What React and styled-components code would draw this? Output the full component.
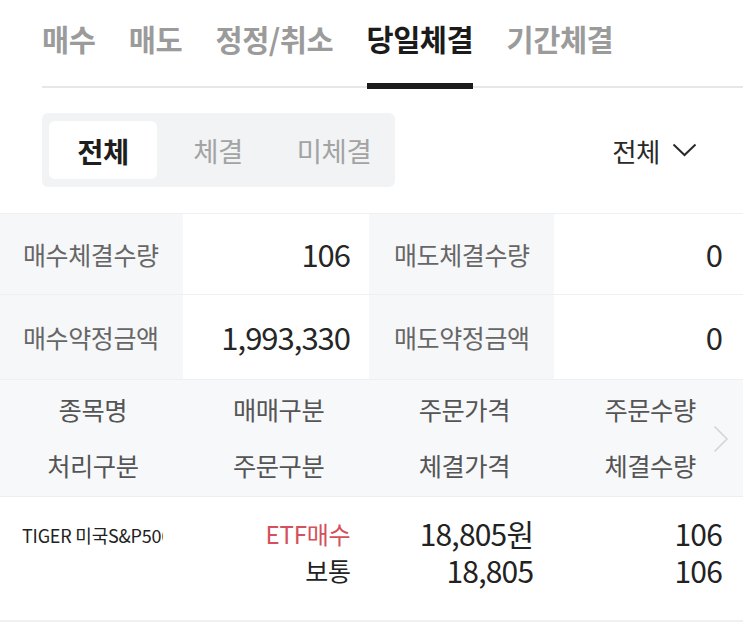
import React from "react";
import styled, { createGlobalStyle } from "styled-components";

const GlobalStyle = createGlobalStyle`
  html, body { margin: 0; padding: 0; background: #ffffff; }
  body { font-family: "Noto Sans CJK KR", "Noto Sans", sans-serif; color: #222; }
  * { box-sizing: border-box; }
`;

const Page = styled.div`
  width: 743px;
  height: 630px;
  overflow: hidden;
  background: #fff;
`;

const TabBar = styled.nav`
  margin-left: 42px;
  height: 88px;
  display: flex;
  gap: 33.5px;
  border-bottom: 2px solid #e6e7e9;
`;

const Tab = styled.div`
  position: relative;
  padding-top: 18px;
  font-size: 29.5px;
  line-height: 40px;
  font-weight: 700;
  color: ${(p) => (p.$active ? "#1b1b1b" : "#9b9b9b")};
  letter-spacing: -0.5px;
  &::after {
    content: "";
    display: ${(p) => (p.$active ? "block" : "none")};
    position: absolute;
    left: 0;
    right: 0;
    bottom: -3px;
    height: 6px;
    background: #1b1b1b;
  }
`;

const FilterRow = styled.div`
  margin-top: 25px;
  padding: 0 46px 0 42px;
  display: flex;
  align-items: center;
  justify-content: space-between;
`;

const Segment = styled.div`
  display: grid;
  grid-template-columns: 108px 122px 110px;
  padding: 8px 6px 8px 7px;
  height: 74px;
  background: #f1f3f5;
  border-radius: 6px;
`;

const SegItem = styled.div`
  display: flex;
  align-items: center;
  justify-content: center;
  border-radius: 6px;
  font-size: ${(p) => (p.$active ? 28.5 : 27.5)}px;
  letter-spacing: -0.5px;
  font-weight: ${(p) => (p.$active ? 700 : 400)};
  color: ${(p) => (p.$active ? "#1e1e1e" : "#a3a3a3")};
  background: ${(p) => (p.$active ? "#ffffff" : "transparent")};
`;

const Dropdown = styled.div`
  display: flex;
  align-items: center;
  gap: 12px;
  font-size: 26.5px;
  letter-spacing: -0.5px;
  color: #2a2a2a;
`;

const SummaryGrid = styled.div`
  margin-top: 26px;
  display: grid;
  grid-template-columns: 183px 186px 185px 189px;
  grid-auto-rows: 80px 84px;
  gap: 1px 0;
  background: #eef0f2;
  border-top: 1px solid #eef0f2;
  border-bottom: 1px solid #eef0f2;
`;

const SumLabel = styled.div`
  display: flex;
  align-items: center;
  padding-left: ${(p) => p.$pad || 23}px;
  background: #f6f7f9;
  font-size: 25px;
  color: #666;
  letter-spacing: -0.4px;
`;

const SumValue = styled.div`
  display: flex;
  align-items: center;
  justify-content: flex-end;
  padding-right: ${(p) => p.$pad || 20}px;
  background: #fff;
  font-size: 31px;
  letter-spacing: -1px;
  color: #262626;
  padding-bottom: 2px;
`;

const HeaderGrid = styled.div`
  position: relative;
  display: grid;
  grid-template-columns: repeat(4, 1fr);
  grid-auto-rows: 56px;
  padding-top: 1px;
  padding-bottom: 3px;
  background: #f7f8fa;
  border-bottom: 1px solid #eceef0;
`;

const HeadCell = styled.div`
  display: flex;
  align-items: center;
  justify-content: center;
  font-size: 25.3px;
  color: #555;
  letter-spacing: -0.4px;
`;

const MoreArrow = styled.svg`
  position: absolute;
  right: 14px;
  top: 45px;
`;

const DataRow = styled.div`
  display: grid;
  grid-template-columns: repeat(4, 1fr);
  padding: 18px 0 31px;
  border-bottom: 2px solid #eff0f2;
`;

const Cell = styled.div`
  display: flex;
  flex-direction: column;
  align-items: ${(p) => (p.$left ? "flex-start" : "flex-end")};
  padding-left: ${(p) => (p.$left ? 22 : 0)}px;
  padding-right: ${(p) => (p.$left ? 22 : p.$pad || 21)}px;
  min-width: 0;
`;

const Line = styled.div`
  height: 37px;
  line-height: 37px;
  white-space: nowrap;
  font-size: ${(p) => p.$size || 30}px;
  color: ${(p) => p.$color || "#222"};
  letter-spacing: ${(p) => p.$ls ?? -0.8}px;
`;

const NameLine = styled.div`
  height: 37px;
  line-height: 37px;
  width: 141px;
  overflow: hidden;
  white-space: nowrap;
  font-size: 18px;
  color: #222;
  margin-top: 2px;
  letter-spacing: -0.2px;
`;

export default function App() {
  const tabs = ["매수", "매도", "정정/취소", "당일체결", "기간체결"];
  return (
    <Page>
      <GlobalStyle />
      <TabBar>
        {tabs.map((t) => (
          <Tab key={t} $active={t === "당일체결"}>
            {t}
          </Tab>
        ))}
      </TabBar>
      <FilterRow>
        <Segment>
          <SegItem $active>전체</SegItem>
          <SegItem>체결</SegItem>
          <SegItem>미체결</SegItem>
        </Segment>
        <Dropdown>
          전체
          <svg width="25" height="14" viewBox="0 0 25 14">
            <path d="M1.5 1.5 L12.5 12 L23.5 1.5" fill="none" stroke="#2a2a2a" strokeWidth="2" />
          </svg>
        </Dropdown>
      </FilterRow>
      <SummaryGrid>
        <SumLabel>매수체결수량</SumLabel>
        <SumValue $pad={19}>106</SumValue>
        <SumLabel $pad={25}>매도체결수량</SumLabel>
        <SumValue $pad={21}>0</SumValue>
        <SumLabel>매수약정금액</SumLabel>
        <SumValue $pad={19}>1,993,330</SumValue>
        <SumLabel $pad={25}>매도약정금액</SumLabel>
        <SumValue $pad={21}>0</SumValue>
      </SummaryGrid>
      <HeaderGrid>
        <HeadCell>종목명</HeadCell>
        <HeadCell>매매구분</HeadCell>
        <HeadCell>주문가격</HeadCell>
        <HeadCell>주문수량</HeadCell>
        <HeadCell>처리구분</HeadCell>
        <HeadCell>주문구분</HeadCell>
        <HeadCell>체결가격</HeadCell>
        <HeadCell>체결수량</HeadCell>
        <MoreArrow width="16" height="28" viewBox="0 0 16 28">
          <path d="M1.5 1.5 L14 14 L1.5 26.5" fill="none" stroke="#d3d5d8" strokeWidth="1.6" />
        </MoreArrow>
      </HeaderGrid>
      <DataRow>
        <Cell $left>
          <NameLine>TIGER 미국S&amp;P500</NameLine>
        </Cell>
        <Cell>
          <Line $size={24} $ls={-0.2} $color="#d4505a">ETF매수</Line>
          <Line $size={25} $ls={-0.4}>보통</Line>
        </Cell>
        <Cell $pad={24}>
          <Line>18,805원</Line>
          <Line>18,805</Line>
        </Cell>
        <Cell>
          <Line>106</Line>
          <Line>106</Line>
        </Cell>
      </DataRow>
    </Page>
  );
}
